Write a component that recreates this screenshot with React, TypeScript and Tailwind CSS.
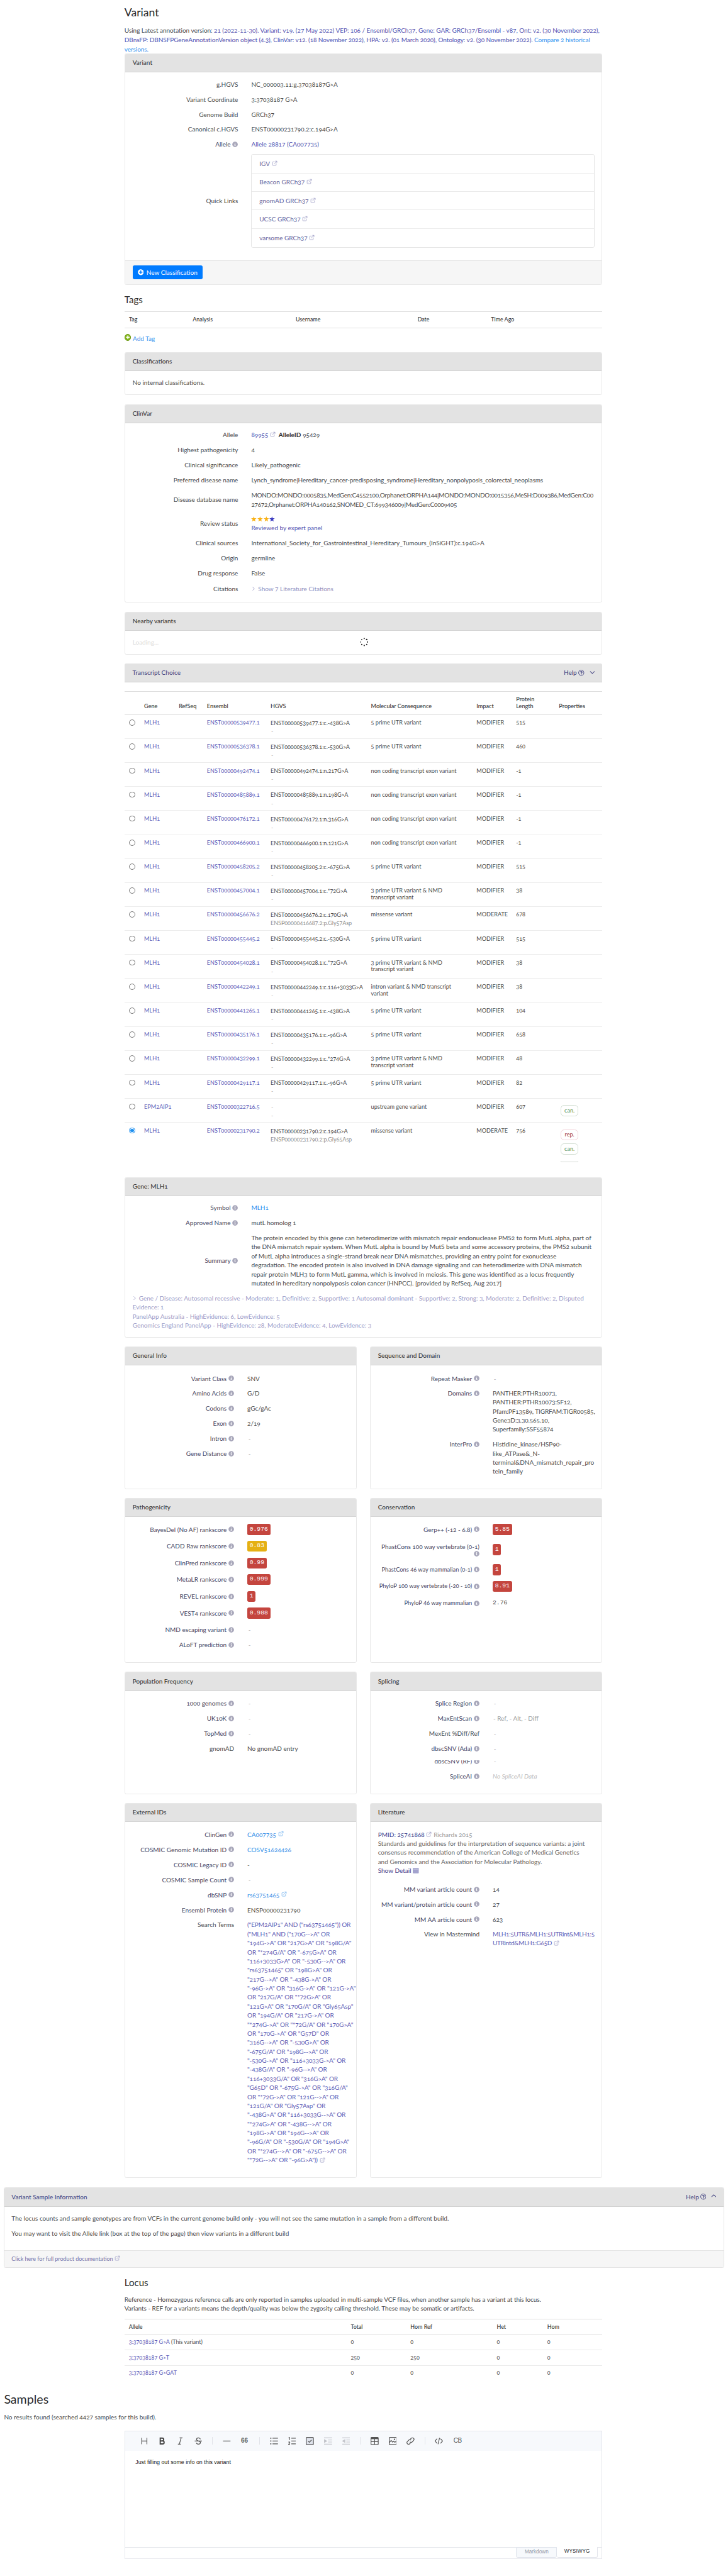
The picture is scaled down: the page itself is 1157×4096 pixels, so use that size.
import React from "react";
import { ExternalLink, ChevronDown, ChevronUp, ChevronRight } from "lucide-react";
import { FaInfoCircle, FaRegQuestionCircle, FaPlusCircle } from "react-icons/fa";

type Kids = { children?: React.ReactNode; className?: string };

const Info = () => <FaInfoCircle className="ml-[3px] inline size-[10px] shrink-0 text-[#a9a8bb]" />;

const Ext = ({ className = "text-[#9a9ac4]" }: { className?: string }) => (
  <ExternalLink strokeWidth={2} className={`ml-[3px] inline size-[10px] shrink-0 -translate-y-px ${className}`} />
);

const Star = ({ className = "" }: { className?: string }) => (
  <svg viewBox="0 0 20 20" fill="currentColor" className={`size-[9.500px] ${className}`}>
    <path d="M10 0l2.500 7.200h7.500l-6 4.600 2.200 7.500L10 14.800l-6.200 4.500L6 11.800 0 7.200h7.500z" />
  </svg>
);

const Dash = () => <span className="ml-[2px] text-[#b5b5b5]">-</span>;

function Card({ title, className = "", children }: Kids & { title: string }) {
  return (
    <section className={`flex flex-col overflow-hidden rounded-[3px] border border-[#e8e8e8] bg-white ${className}`}>
      <header className="-mx-px -mt-px flex h-[33px] shrink-0 items-center border-b border-[#d3d3d3] bg-[#e3e3e3] pl-[14px] font-medium text-[#3a3a3a]">
        {title}
      </header>
      {children}
    </section>
  );
}

/** Label on the left, value on the right, as used in the full-width cards. */
function Wide({ label, info, className = "h-[26.3px]", children }: Kids & { label: string; info?: boolean }) {
  return (
    <div className={`flex shrink-0 items-center ${className}`}>
      <div className={`flex w-[197px] shrink-0 items-center justify-end whitespace-nowrap ${info ? "text-[#45455f]" : ""}`}>
        {label}
        {info && <Info />}
      </div>
      <div className="ml-[23px] flex items-center whitespace-nowrap">{children}</div>
    </div>
  );
}

/** Label / value pair of the half-width cards. */
function Half({ label, info = true, className = "h-[26.3px]", labelClass = "", children }: Kids & { label: string; info?: boolean; labelClass?: string }) {
  return (
    <div className={`flex shrink-0 items-center ${className}`}>
      <div className={`flex w-[190px] shrink-0 items-center justify-end whitespace-nowrap ${info ? "text-[#45455f]" : ""} ${labelClass}`}>
        {label}
        {info && <Info />}
      </div>
      <div className="ml-[23px] flex items-center whitespace-nowrap">{children ?? <Dash />}</div>
    </div>
  );
}

/** Multi-line value whose label sits on the first line. */
function Tall({ label, info = true, lines, className = "", end }: { label: string; info?: boolean; lines: string[]; className?: string; end?: React.ReactNode }) {
  return (
    <div className="flex shrink-0 items-start leading-[15.78px]">
      <div className={`flex w-[190px] shrink-0 items-center justify-end whitespace-nowrap ${info ? "text-[#45455f]" : ""}`}>
        {label}
        {info && <Info />}
      </div>
      <div className={`ml-[23px] whitespace-nowrap ${className}`}>
        {lines.map((l, i) => (
          <div key={i} className="h-[15.78px]">
            {l}
            {i === lines.length - 1 && end}
          </div>
        ))}
      </div>
    </div>
  );
}

const Score = ({ v, amber }: { v: string; amber?: boolean }) => (
  <span
    className={`flex h-[19px] items-center rounded-[3px] px-[4px] font-['Liberation_Mono',monospace] text-[10.7px] lining-nums text-white ${amber ? "bg-[#e5b013]" : "bg-[#c4453e]"}`}
  >
    {v}
  </span>
);

const M = "5 prime UTR variant";
const NC = "non coding transcript exon variant";
const transcripts: [string, string, string, string, string, string, string][] = [
  ["MLH1", "ENST00000539477.1", "ENST00000539477.1:c.-438G>A", "-", M, "MODIFIER", "515"],
  ["MLH1", "ENST00000536378.1", "ENST00000536378.1:c.-530G>A", "-", M, "MODIFIER", "460"],
  ["MLH1", "ENST00000492474.1", "ENST00000492474.1:n.217G>A", "-", NC, "MODIFIER", "-1"],
  ["MLH1", "ENST00000485889.1", "ENST00000485889.1:n.198G>A", "-", NC, "MODIFIER", "-1"],
  ["MLH1", "ENST00000476172.1", "ENST00000476172.1:n.316G>A", "-", NC, "MODIFIER", "-1"],
  ["MLH1", "ENST00000466900.1", "ENST00000466900.1:n.121G>A", "-", NC, "MODIFIER", "-1"],
  ["MLH1", "ENST00000458205.2", "ENST00000458205.2:c.-675G>A", "-", M, "MODIFIER", "515"],
  ["MLH1", "ENST00000457004.1", "ENST00000457004.1:c.*72G>A", "-", "3 prime UTR variant & NMD\ntranscript variant", "MODIFIER", "38"],
  ["MLH1", "ENST00000456676.2", "ENST00000456676.2:c.170G>A", "ENSP00000416687.2:p.Gly57Asp", "missense variant", "MODERATE", "678"],
  ["MLH1", "ENST00000455445.2", "ENST00000455445.2:c.-530G>A", "-", M, "MODIFIER", "515"],
  ["MLH1", "ENST00000454028.1", "ENST00000454028.1:c.*72G>A", "-", "3 prime UTR variant & NMD\ntranscript variant", "MODIFIER", "38"],
  ["MLH1", "ENST00000442249.1", "ENST00000442249.1:c.116+3033G>A", "-", "intron variant & NMD transcript\nvariant", "MODIFIER", "38"],
  ["MLH1", "ENST00000441265.1", "ENST00000441265.1:c.-438G>A", "-", M, "MODIFIER", "104"],
  ["MLH1", "ENST00000435176.1", "ENST00000435176.1:c.-96G>A", "-", M, "MODIFIER", "658"],
  ["MLH1", "ENST00000432299.1", "ENST00000432299.1:c.*274G>A", "-", "3 prime UTR variant & NMD\ntranscript variant", "MODIFIER", "48"],
  ["MLH1", "ENST00000429117.1", "ENST00000429117.1:c.-96G>A", "-", M, "MODIFIER", "82"],
  ["EPM2AIP1", "ENST00000322716.5", "-", "-", "upstream gene variant", "MODIFIER", "607"],
  ["MLH1", "ENST00000231790.2", "ENST00000231790.2:c.194G>A", "ENSP00000231790.2:p.Gly65Asp", "missense variant", "MODERATE", "756"],
];

const cols = "grid grid-cols-[34.3px_60.4px_49px_111px_175px_184px_69px_74.7px_75.6px]";

const Pill = ({ t, className }: { t: string; className: string }) => (
  <span className={`flex h-[19.5px] w-[31px] shrink-0 items-center justify-center rounded-[6px] border bg-white ${className}`}>{t}</span>
);

function Transcripts() {
  return (
    <div className="h-[847px] text-[10px]">
      <div className={`${cols} h-[41px] items-end border-t border-b-2 border-[#dedede] pb-[8px] text-[10px] leading-[11.7px] font-medium text-[#333]`}>
        <span />
        <span>Gene</span>
        <span>RefSeq</span>
        <span>Ensembl</span>
        <span>HGVS</span>
        <span>Molecular Consequence</span>
        <span>Impact</span>
        <span>
          Protein
          <br />
          Length
        </span>
        <span>Properties</span>
      </div>
      {transcripts.map(([gene, ens, hgvs, prot, cons, impact, len], i) => {
        const last = i === transcripts.length - 1;
        return (
          <div key={ens} className={`${cols} h-[41.86px] pt-[8.2px] leading-[11.7px] ${last ? "" : "border-b border-[#ececec]"}`}>
            <span className={`ml-[8px] flex size-[10.5px] items-center justify-center rounded-full border ${last ? "border-[#1e90f0]" : "border-[#777]"}`}>
              {last && <span className="size-[6px] rounded-full bg-[#1e90f0]" />}
            </span>
            <span className="text-[#5a5ab8]">{gene}</span>
            <span />
            <span className="text-[#5a5ab8]">{ens}</span>
            <span className="-mt-[1.5px] flex flex-col tracking-[-0.1px] whitespace-nowrap leading-[14.5px]">
              <span className={hgvs === "-" ? "pl-[1px] text-[#b5b5b5]" : ""}>{hgvs}</span>
              <span className={prot === "-" ? "pl-[1px] text-[#b5b5b5]" : "text-[#8f8f8f]"}>{prot}</span>
            </span>
            <span className="whitespace-pre">{cons}</span>
            <span>{impact}</span>
            <span>{len}</span>
            <span className="flex flex-col gap-[5.5px] self-start pt-[3px] pl-[3px]">
              {last && <Pill t="rep." className="border-[#f3d3da] text-[#9c3540]" />}
              {i >= transcripts.length - 2 && <Pill t="can." className="border-[#d3dfd3] text-[#559055]" />}
              {last && <span className="mt-[5px] h-[3px] w-[31px] shrink-0 rounded-b-[6px] border border-t-0 border-[#d3d9d3]" />}
            </span>
          </div>
        );
      })}
    </div>
  );
}

const searchTerms = `("EPM2AIP1" AND ("rs63751465")) OR
("MLH1" AND ("170G-->A" OR
"194G->A" OR "217G>A" OR "198G/A"
OR "*274G/A" OR "-675G>A" OR
"116+3033G>A" OR "-530G-->A" OR
"rs63751465" OR "198G>A" OR
"217G-->A" OR "-438G->A" OR
"-96G->A" OR "316G->A" OR "121G->A"
OR "217G/A" OR "*72G>A" OR
"121G>A" OR "170G/A" OR "Gly65Asp"
OR "194G/A" OR "217G->A" OR
"*274G->A" OR "*72G/A" OR "170G>A"
OR "170G->A" OR "G57D" OR
"316G-->A" OR "-530G>A" OR
"-675G/A" OR "198G-->A" OR
"-530G->A" OR "116+3033G->A" OR
"-438G/A" OR "-96G-->A" OR
"116+3033G/A" OR "316G>A" OR
"G65D" OR "-675G->A" OR "316G/A"
OR "*72G->A" OR "121G-->A" OR
"121G/A" OR "Gly57Asp" OR
"-438G>A" OR "116+3033G-->A" OR
"*274G>A" OR "-438G-->A" OR
"198G->A" OR "194G-->A" OR
"-96G/A" OR "-530G/A" OR "194G>A"
OR "*274G-->A" OR "-675G-->A" OR
"*72G-->A" OR "-96G>A"))`.split("\n");

const Tool = ({ children, className = "text-[#555]" }: Kids) => (
  <svg viewBox="0 0 14 14" fill="none" stroke="currentColor" strokeWidth="1.3" className={`mr-[17.5px] size-[14px] shrink-0 ${className}`}>
    {children}
  </svg>
);
const Sep = ({ className = "" }: Kids) => <span className={`h-[13px] w-px shrink-0 bg-[#e1e3e9] ${className}`} />;

function Editor() {
  return (
    <div className="mt-[15px] ml-[217px] flex h-[224px] w-[833px] flex-col border border-[#e4e6ec] font-['Liberation_Sans',sans-serif] lining-nums">
      <div className="flex h-[34px] shrink-0 items-center bg-[#f7f9fc] pl-[26px]">
        <Tool><path d="M2.5 1.5v11M11.5 1.5v11M2.5 7h9" /></Tool>
        <Tool className="text-[#444]"><path d="M4 2h3.6a2.4 2.4 0 0 1 0 4.9H4zM4 6.9h4.2a2.6 2.6 0 0 1 0 5.2H4z" strokeWidth="2.1" /></Tool>
        <Tool><path d="M6 1.5h5M3 12.5h5M8.7 1.5l-3.2 11" /></Tool>
        <Tool><path d="M10.5 3.8C10 2.2 8.800 1.500 7 1.500 5 1.500 3.700 2.500 3.700 4.200 3.700 8 10.500 6 10.500 9.700 10.500 11.500 9 12.500 7 12.500 5 12.500 3.700 11.500 3.400 10M.5 7h13" /></Tool>
        <Sep className="mr-[17.500px]" />
        <Tool><path d="M.5 7h13" /></Tool>
        <span className="mr-[18px] w-[14px] shrink-0 text-[11px] leading-[14px] font-bold text-[#666]">66</span>
        <Sep className="mr-[17.500px]" />
        <Tool><path d="M4.500 2H14M4.500 7H14M4.500 12H14" /><path d="M.5 2h2M.5 7h2M.5 12h2" strokeWidth="2" /></Tool>
        <Tool><path d="M5.500 2H14M5.500 7H14M5.500 12H14" /><path d="M.7 1.600 2.200.8v4.400M.5 9.200c.8-1.100 2.800-.6 2.200.9L.7 13h2.500" /></Tool>
        <Tool><rect x=".7" y=".7" width="12.600" height="12.600" rx="1" fill="#dfe3ec" /><path d="m4 7 2.200 2.200L10 5.200" /></Tool>
        <Tool className="text-[#c4c6cc]"><path d="M0 1.500h14M7 5.200h7M7 8.800h7M0 12.500h14" /><path d="M.5 4.700v4.600L4.500 7z" fill="currentColor" /></Tool>
        <Tool className="text-[#c4c6cc]"><path d="M0 1.500h14M7 5.200h7M7 8.800h7M0 12.500h14" /><path d="M4.500 4.700v4.600L.5 7z" fill="currentColor" /></Tool>
        <Sep className="mr-[17px]" />
        <Tool><rect x=".7" y=".7" width="12.600" height="12.600" rx="1" /><path d="M.7 2.200h12.600" strokeWidth="3" /><path d="M7 2v11M.7 8h12.600" /></Tool>
        <Tool><rect x=".7" y=".7" width="12.600" height="12.600" rx="1" /><path d="M1 9.500 4 6l2.500 3 2-1.800 2 2 2.500-2" /><circle cx="9.800" cy="4" r=".6" fill="currentColor" /></Tool>
        <Tool><path d="M6 8.500a2.700 2.700 0 0 0 4 0l2.300-2.300a2.800 2.800 0 0 0-4-4L7 3.500M8 5.500a2.700 2.700 0 0 0-4 0L1.700 7.800a2.800 2.800 0 0 0 4 4L7 10.500" /></Tool>
        <Sep className="mr-[17px]" />
        <Tool><path d="M4 3 .5 7 4 11M10 3l3.500 4L10 11M8.300 1.500l-2.600 11" /></Tool>
        <span className="w-[16px] shrink-0 text-center text-[11px] leading-[14px] tracking-[-0.5px] text-[#555]">CB</span>
      </div>
      <div className="flex-1 pt-[14px] pl-[18px] text-[9.700px] leading-[15px] text-[#222]">Just filling out some info on this variant</div>
      <div className="flex h-[20px] shrink-0 justify-end border-t border-[#e4e6ec] pr-[7px] text-[9px]">
        <span className="-mt-px flex h-[18.500px] w-[71px] items-center justify-center rounded-b-[3px] border border-[#e0e4ec] bg-[#f7f9fc] text-[#969aa5]">Markdown</span>
        <span className="-mt-px flex h-[18.500px] w-[71px] items-center justify-center rounded-b-[3px] border border-t-0 border-l-0 border-[#e4e6ec] bg-white text-[#333]">WYSIWYG</span>
      </div>
    </div>
  );
}

const lcols = "grid grid-cols-[387px_104px_150.500px_88px_96px] items-center pl-[7.500px]";
const locus: [string, string, string][] = [
  ["3:37038187 G>A", " (This variant)", "0"],
  ["3:37038187 G>T", "", "250"],
  ["3:37038187 G>GAT", "", "0"],
];

export default function App() {
  return (
    <div className="h-[4493px] w-[1269px] overflow-hidden bg-white font-['Lato',sans-serif] text-[11px] leading-[16px] text-[#4a4a4a] oldstyle-nums [zoom:0.9117]">
      <div className="ml-[217px] w-[833px]">
        <h1 className="flex h-[45.500px] items-center text-[19.300px] text-[#2a2a2a]">Variant</h1>
        <p className="h-[47.500px] tracking-[-0.040px] whitespace-nowrap text-[#5050b0]">
          <span className="text-[#444]">Using Latest annotation version: </span>
          21 (2022-11-30). Variant: v19. (27 May 2022) VEP: 106 / Ensembl/GRCh37, Gene: GAR: GRCh37/Ensembl - v87, Ont: v2. (30 November 2022),
          <br />
          <span className="tracking-[-0.080px]">
            DBnsFP: DBNSFPGeneAnnotationVersion object (4.3), ClinVar: v12. (18 November 2022), HPA: v2. (01 March 2020), Ontology: v2. (30 November 2022).{" "}
            <span className="text-[#3390ee]">
              Compare 2 historical
              <br />
              versions.
            </span>
          </span>
        </p>
        <Card title="Variant" className="h-[403.500px]">
          <div className="h-[8px] shrink-0" />
          <Wide label="g.HGVS" className="h-[26.200px]">NC_000003.11:g.37038187G&gt;A</Wide>
          <Wide label="Variant Coordinate" className="h-[26.200px]">3:37038187 G&gt;A</Wide>
          <Wide label="Genome Build" className="h-[26.200px]">GRCh37</Wide>
          <Wide label="Canonical c.HGVS" className="h-[26.200px]">ENST00000231790.2:c.194G&gt;A</Wide>
          <Wide label="Allele" info className="h-[26.200px]">
            <span className="text-[#5050b0]">Allele 28817 (CA007735)</span>
          </Wide>
          <Wide label="Quick Links" className="mt-[4.600px] h-[162px]">
            <ul className="w-[599px] divide-y divide-[#ebebeb] rounded-[3px] border border-[#e6e6e6] text-[#62629c]">
              {["IGV", "Beacon GRCh37", "gnomAD GRCh37", "UCSC GRCh37", "varsome GRCh37"].map((l) => (
                <li key={l} className="flex h-[32.200px] items-center pl-[13px]">
                  {l}
                  <Ext />
                </li>
              ))}
            </ul>
          </Wide>
          <footer className="mt-auto flex h-[41.500px] items-center border-t border-[#e2e2e2] bg-[#f6f6f6] pl-[13px]">
            <button className="flex h-[24px] w-[122px] items-center justify-center gap-[5px] rounded-[3px] bg-[#007bff] whitespace-nowrap text-white">
              <FaPlusCircle className="size-[10.500px]" />
              New Classification
            </button>
          </footer>
        </Card>

        <h2 className="flex h-[46.500px] items-center pt-[6px] text-[16.500px] text-[#2a2a2a]">Tags</h2>
        <div className="grid h-[30px] grid-cols-[111px_179.500px_212.500px_128px_1fr] items-center border-t border-b-2 border-[#dedede] pl-[8px] text-[9.700px] font-medium text-[#333]">
          <span>Tag</span>
          <span>Analysis</span>
          <span>Username</span>
          <span>Date</span>
          <span>Time Ago</span>
        </div>
        <div className="flex h-[41px] items-center pb-[5px] text-[#3f95ee]">
          <span className="mr-[3px] mb-[5px] flex size-[11.500px] items-center justify-center rounded-full border border-[#6f9a1c] bg-[#86b81e]">
            <svg viewBox="0 0 8 8" className="size-[7px]" stroke="#fff" strokeWidth="2">
              <path d="M4 .5v7M.5 4h7" />
            </svg>
          </span>
          Add Tag
        </div>
        <Card title="Classifications" className="h-[75px]">
          <div className="flex flex-1 items-center pl-[13px]">No internal classifications.</div>
        </Card>

        <Card title="ClinVar" className="mt-[16px] h-[345.500px]">
          <div className="h-[7px] shrink-0" />
          <Wide label="Allele" className="h-[26.400px]">
            <span className="text-[#5050b0]">89955</span>
            <Ext />
            <b className="mr-[3px] ml-[5px] font-bold text-[#333]">AlleleID</b>95429
          </Wide>
          <Wide label="Highest pathogenicity" className="h-[26.400px]">4</Wide>
          <Wide label="Clinical significance" className="h-[26.400px]">Likely_pathogenic</Wide>
          <Wide label="Preferred disease name" className="h-[26.400px]">
            <span className="tracking-[-0.110px]">Lynch_syndrome|Hereditary_cancer-predisposing_syndrome|Hereditary_nonpolyposis_colorectal_neoplasms</span>
          </Wide>
          <Wide label="Disease database name" className="h-[42px]">
            <span className="tracking-[-0.280px]">
              MONDO:MONDO:0005835,MedGen:C4552100,Orphanet:ORPHA144|MONDO:MONDO:0015356,MeSH:D009386,MedGen:C00
              <br />
              27672,Orphanet:ORPHA140162,SNOMED_CT:699346009|MedGen:C0009405
            </span>
          </Wide>
          <Wide label="Review status" className="h-[41.500px]">
            <div className="flex flex-col text-[#5050b0]">
              <span className="flex h-[15px] items-center gap-[1px] text-[#f9b115]">
                <Star />
                <Star />
                <Star />
                <Star className="text-[#3c3cc0]" />
              </span>
              Reviewed by expert panel
            </div>
          </Wide>
          <Wide label="Clinical sources" className="h-[26.400px]">
            International_Society_for_Gastrointestinal_Hereditary_Tumours_(InSiGHT):c.194G&gt;A
          </Wide>
          <Wide label="Origin" className="h-[26.400px]">germline</Wide>
          <Wide label="Drug response" className="h-[26.400px]">False</Wide>
          <Wide label="Citations" className="h-[26.400px]">
            <span className="flex items-center text-[#9090c0]">
              <ChevronRight className="mr-[3px] -ml-[2px] size-[11px]" />
              Show 7 Literature Citations
            </span>
          </Wide>
        </Card>

        <Card title="Nearby variants" className="mt-[16.500px] h-[74.500px]">
          <div className="flex flex-1 items-center pl-[13px]">
            <span className="w-[396px] text-[#dcdcdc]">Loading...</span>
            <svg viewBox="0 0 16 16" className="size-[15px]" fill="#222">
              <circle cx="8" cy="1.500" r="1.200" />
              <circle cx="12.600" cy="3.400" r="1.400" />
              <circle cx="14.500" cy="8" r="1.300" />
              <circle cx="12.600" cy="12.600" r="1.200" />
              <circle cx="8" cy="14.500" r="1.200" />
              <circle cx="3.400" cy="12.600" r="1.200" />
              <circle cx="1.500" cy="8" r="1" />
              <circle cx="3.400" cy="3.400" r="1" />
            </svg>
          </div>
        </Card>

        <div className="mt-[16px] mb-[15.500px] flex h-[33px] items-center rounded-t-[3px] border-b border-[#cfcfcf] bg-[#e3e3e3] pr-[11px] pl-[14px] font-medium text-[#4a4a86]">
          Transcript Choice
          <span className="ml-auto flex items-center">
            Help
            <FaRegQuestionCircle className="mr-[6px] ml-[3px] size-[10.500px]" />
            <ChevronDown className="size-[14px]" strokeWidth={2} />
          </span>
        </div>
        <Transcripts />

        <Card title="Gene: MLH1" className="h-[280px]">
          <div className="h-[7px] shrink-0" />
          <Wide label="Symbol" info className="h-[27px]">
            <span className="text-[#2288ee]">MLH1</span>
          </Wide>
          <Wide label="Approved Name" info className="h-[26.400px]">mutL homolog 1</Wide>
          <Wide label="Summary" info className="mt-[4px] h-[96px]">
            <div className="leading-[15.800px]">
              The protein encoded by this gene can heterodimerize with mismatch repair endonuclease PMS2 to form MutL alpha, part of
              <br />
              the DNA mismatch repair system. When MutL alpha is bound by MutS beta and some accessory proteins, the PMS2 subunit
              <br />
              of MutL alpha introduces a single-strand break near DNA mismatches, providing an entry point for exonuclease
              <br />
              degradation. The encoded protein is also involved in DNA damage signaling and can heterodimerize with DNA mismatch
              <br />
              repair protein MLH3 to form MutL gamma, which is involved in meiosis. This gene was identified as a locus frequently
              <br />
              mutated in hereditary nonpolyposis colon cancer (HNPCC). [provided by RefSeq, Aug 2017]
            </div>
          </Wide>
          <div className="mt-[9.500px] pl-[13px] leading-[15.900px] tracking-[-0.030px] whitespace-nowrap text-[#9c9cc8]">
            <ChevronRight className="mr-[2px] -ml-[2px] inline size-[11px] -translate-y-px" />
            Gene / Disease: Autosomal recessive - Moderate: 1, Definitive: 2, Supportive: 1 Autosomal dominant - Supportive: 2, Strong: 3, Moderate: 2, Definitive: 2, Disputed
            <br />
            Evidence: 1
            <br />
            PanelApp Australia - HighEvidence: 6, LowEvidence: 5
            <br />
            Genomics England PanelApp - HighEvidence: 28, ModerateEvidence: 4, LowEvidence: 3
          </div>
        </Card>

        <div className="mt-[15.500px] grid grid-cols-2 gap-x-[22.500px] gap-y-[16px]">
          <Card title="General Info" className="h-[248.500px]">
            <div className="h-[9.500px] shrink-0" />
            <Half label="Variant Class">SNV</Half>
            <Half label="Amino Acids">G/D</Half>
            <Half label="Codons">gGc/gAc</Half>
            <Half label="Exon">2/19</Half>
            <Half label="Intron" />
            <Half label="Gene Distance" />
          </Card>
          <Card title="Sequence and Domain" className="h-[248.500px]">
            <div className="h-[9.500px] shrink-0" />
            <Half label="Repeat Masker" />
            <div className="h-[4.500px] shrink-0" />
            <Tall
              label="Domains"
              className="tracking-[-0.100px]"
              lines={["PANTHER:PTHR10073,", "PANTHER:PTHR10073:SF12,", "Pfam:PF13589, TIGRFAM:TIGR00585,", "Gene3D:3.30.565.10,", "Superfamily:SSF55874"]}
            />
            <div className="h-[10.500px] shrink-0" />
            <Tall label="InterPro" lines={["Histidine_kinase/HSP90-", "like_ATPase&_N-", "terminal&DNA_mismatch_repair_pro", "tein_family"]} />
          </Card>

          <Card title="Pathogenicity" className="h-[287px]">
            <div className="h-[7px] shrink-0" />
            <Half className="h-[29.200px]" label="BayesDel (No AF) rankscore"><Score v="0.976" /></Half>
            <Half className="h-[29.200px]" label="CADD Raw rankscore"><Score v="0.83" amber /></Half>
            <Half className="h-[29.200px]" label="ClinPred rankscore"><Score v="0.99" /></Half>
            <Half className="h-[29.200px]" label="MetaLR rankscore"><Score v="0.999" /></Half>
            <Half className="h-[29.200px]" label="REVEL rankscore"><Score v="1" /></Half>
            <Half className="h-[29.200px]" label="VEST4 rankscore"><Score v="0.988" /></Half>
            <Half className="mt-[1px] h-[26.300px]" label="NMD escaping variant" />
            <Half label="ALoFT prediction" />
          </Card>
          <Card title="Conservation" className="h-[287px]">
            <div className="h-[7px] shrink-0" />
            <Half className="h-[29.200px]" label="Gerp++ (-12 - 6.8)"><Score v="5.85" /></Half>
            <div className="flex h-[41px] shrink-0 items-center">
              <div className="flex w-[190px] shrink-0 flex-col items-end leading-[15.500px] text-[#45455f]">
                PhastCons 100 way vertebrate (0-1)
                <Info />
              </div>
              <div className="ml-[23px]"><Score v="1" /></div>
            </div>
            <Half className="h-[29.200px]" labelClass="text-[10.200px]" label="PhastCons 46 way mammalian (0-1)"><Score v="1" /></Half>
            <Half className="h-[29.200px]" labelClass="text-[10.200px]" label="PhyloP 100 way vertebrate (-20 - 10)"><Score v="8.91" /></Half>
            <Half className="h-[29.200px]" labelClass="text-[10.200px]" label="PhyloP 46 way mammalian">
              <span className="font-['Liberation_Mono',monospace] text-[10.700px] lining-nums">2.76</span>
            </Half>
          </Card>

          <Card title="Population Frequency" className="h-[213px]">
            <div className="h-[8.500px] shrink-0" />
            <Half label="1000 genomes" />
            <Half label="UK10K" />
            <Half label="TopMed" />
            <Half label="gnomAD" info={false}>No gnomAD entry</Half>
          </Card>
          <Card title="Splicing" className="h-[213px]">
            <div className="h-[8.500px] shrink-0" />
            <Half label="Splice Region" />
            <Half label="MaxEntScan"><span className="pl-[1px] text-[#999]">- Ref, - Alt, - Diff</span></Half>
            <Half label="MexEnt %Diff/Ref" info={false} />
            <Half label="dbscSNV (Ada)" />
            <div className="mt-[8px] h-[14px] shrink-0 overflow-hidden">
              <Half className="-mt-[7px] h-[16px]" label="dbscSNV (RF)" />
            </div>
            <Half label="SpliceAI"><i className="text-[#bdbdbd]">No SpliceAI Data</i></Half>
          </Card>

          <Card title="External IDs" className="h-[653.500px]">
            <div className="h-[8.500px] shrink-0" />
            <Half label="ClinGen"><span className="text-[#2f8fe8]">CA007735</span><Ext className="text-[#6fb0ee]" /></Half>
            <Half label="COSMIC Genomic Mutation ID"><span className="text-[#2f8fe8]">COSV51624426</span></Half>
            <Half label="COSMIC Legacy ID">-</Half>
            <Half label="COSMIC Sample Count" />
            <Half label="dbSNP"><span className="text-[#2f8fe8]">rs63751465</span><Ext className="text-[#6fb0ee]" /></Half>
            <Half label="Ensembl Protein">ENSP00000231790</Half>
            <div className="h-[5px] shrink-0" />
            <Tall label="Search Terms" info={false} lines={searchTerms} className="tracking-[-0.120px] text-[#5d5db5]" end={<Ext />} />
          </Card>
          <Card title="Literature" className="h-[653.500px]">
            <div className="mt-[13.500px] mb-[11.500px] pl-[13px] leading-[15.800px] whitespace-nowrap text-[#666]">
              <span className="text-[#40408c]">PMID: 25741868</span>
              <Ext /> <span className="text-[#999]">Richards 2015</span>
              <br />
              Standards and guidelines for the interpretation of sequence variants: a joint
              <br />
              consensus recommendation of the American College of Medical Genetics
              <br />
              and Genomics and the Association for Molecular Pathology.
              <div className="flex items-center text-[#40408c]">
                Show Detail
                <svg viewBox="0 0 11 10" className="ml-[3px] h-[9.500px] w-[10.500px]">
                  <rect width="11" height="10" rx="1" fill="#a3a3ce" />
                  <path d="M1 2.300h9" stroke="#e6e6f4" strokeWidth=".9" />
                </svg>
              </div>
            </div>
            <Half label="MM variant article count">14</Half>
            <Half label="MM variant/protein article count">27</Half>
            <Half label="MM AA article count">623</Half>
            <div className="h-[4.500px] shrink-0" />
            <Tall label="View in Mastermind" info={false} lines={["MLH1:5UTR&MLH1:5UTRint&MLH1:5", "UTRintd&MLH1:G65D"]} className="tracking-[-0.350px] text-[#5d5db5]" end={<Ext />} />
          </Card>
        </div>
      </div>

      <section className="mt-[17px] ml-[7px] flex h-[140px] w-[1255px] flex-col overflow-hidden rounded-[3px] border border-[#e4e4e4]">
        <header className="-mx-px -mt-px flex h-[33px] shrink-0 items-center border-b border-[#d3d3d3] bg-[#e3e3e3] pr-[11px] pl-[13px] font-medium text-[#4a4a86]">
          Variant Sample Information
          <span className="ml-auto flex items-center">
            Help
            <FaRegQuestionCircle className="mr-[6px] ml-[2px] size-[10.500px]" />
            <ChevronUp className="mb-[4px] size-[14px]" strokeWidth={2} />
          </span>
        </header>
        <p className="mt-[12.500px] pl-[12px]">The locus counts and sample genotypes are from VCFs in the current genome build only - you will not see the same mutation in a sample from a different build.</p>
        <p className="mt-[10px] pl-[12px]">You may want to visit the Allele link (box at the top of the page) then view variants in a different build</p>
        <footer className="mt-auto flex h-[30px] items-center border-t border-[#e4e4e4] bg-[#f6f6f6] pl-[12px] text-[9.800px] text-[#7070a8]">
          Click here for full product documentation
          <Ext />
        </footer>
      </section>

      <div className="ml-[217px] w-[833px]">
        <h2 className="mt-[16px] flex h-[20px] items-center text-[16.500px] text-[#2a2a2a]">Locus</h2>
        <p className="mt-[11px] mb-[10px] tracking-[-0.060px] whitespace-nowrap">
          Reference - Homozygous reference calls are only reported in samples uploaded in multi-sample VCF files, when another sample has a variant at this locus.
          <br />
          Variants - REF for a variants means the depth/quality was below the zygosity calling threshold. These may be somatic or artifacts.
        </p>
        <div className={`${lcols} h-[28.500px] border-t border-b-2 border-[#dedede] text-[9.800px] font-medium text-[#333]`}>
          <span>Allele</span>
          <span>Total</span>
          <span>Hom Ref</span>
          <span>Het</span>
          <span>Hom</span>
        </div>
        {locus.map(([a, note, n], i) => (
          <div key={a} className={`${lcols} h-[26.600px] text-[9.800px] ${i < 2 ? "border-b border-[#e8e8e8]" : ""}`}>
            <span>
              <span className="text-[#5a5ab8]">{a}</span>
              {note}
            </span>
            <span>{n}</span>
            <span>{n}</span>
            <span>0</span>
            <span>0</span>
          </div>
        ))}
      </div>
      <div className="ml-[7px]">
        <h1 className="mt-[20.500px] flex h-[24px] items-center text-[21.500px] text-[#2a2a2a]">Samples</h1>
        <p className="mt-[11px]">No results found (searched 4427 samples for this build).</p>
      </div>
      <Editor />
    </div>
  );
}
